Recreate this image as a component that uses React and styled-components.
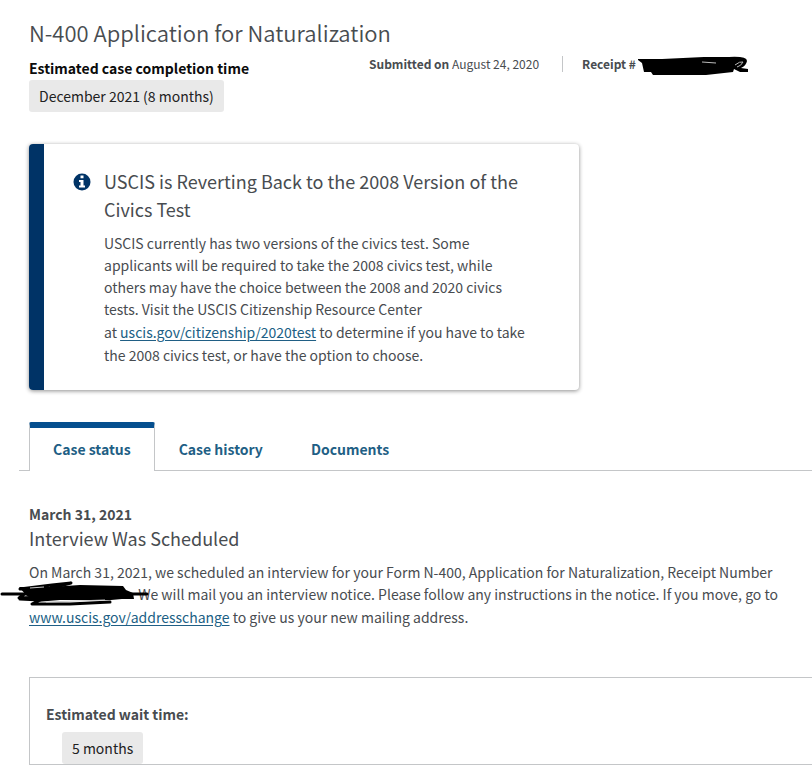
import React from "react";
import styled, { createGlobalStyle } from "styled-components";

const GlobalStyle = createGlobalStyle`
  * { box-sizing: border-box; }
  body {
    margin: 0;
    background: #fff;
    color: #484c50;
    font-family: "Noto Sans CJK SC", "Noto Sans", sans-serif;
    font-size: 14px;
    line-height: 22px;
    overflow-x: hidden;
  }
`;

const Page = styled.main`
  padding: 18px 0 0 29px;
`;

const Title = styled.h1`
  margin: 0;
  font-size: 22px;
  line-height: 28px;
  font-weight: 350;
`;

const Summary = styled.div`
  display: flex;
  align-items: flex-start;
  margin-top: 10px;
`;

const Estimate = styled.div`
  flex: 0 0 340px;
`;

const Label = styled.h2`
  margin: 0;
  color: ${(p) => (p.$strong ? "#0b0b0b" : "#484c50")};
  font-size: 14px;
  line-height: 24px;
  font-weight: 700;
`;

const Chip = styled.span`
  display: inline-block;
  padding: 0 10px;
  border-radius: 3px;
  background: #e9e9e9;
  color: #212121;
  font-size: 14px;
  line-height: 32px;
  vertical-align: top;
`;

const Meta = styled.div`
  display: flex;
  font-size: 12px;
  line-height: 16px;
`;

const MetaItem = styled.div`
  position: relative;
  white-space: nowrap;
  & + & {
    margin-left: 23px;
    padding-left: 19px;
    border-left: 1px solid #c4c6c8;
  }
`;

const ReceiptScribble = styled.svg`
  position: absolute;
  left: 100%;
  top: 0;
  width: 114px;
  height: 22px;
`;

const Alert = styled.section`
  display: flex;
  max-width: 550px;
  margin-top: 32px;
  padding: 23px 46px 24px 29px;
  border-left: 15px solid #003366;
  border-radius: 4px;
  box-shadow: 0 1px 4px rgba(0, 0, 0, 0.45);
`;

const InfoIcon = styled.svg`
  flex: 0 0 18px;
  width: 18px;
  height: 18px;
  margin: 6px 13px 0 0;
`;

const AlertTitle = styled.h2`
  margin: 0 0 9px;
  font-size: 18px;
  line-height: 28px;
  font-weight: 400;
`;

const Text = styled.p`
  margin: 0;
  font-size: 14px;
  line-height: 22px;
`;

const Link = styled.a`
  color: #205f85;
  line-height: 24px;
  text-decoration: underline;
  text-underline-offset: 2px;
`;

const Tabs = styled.div`
  display: flex;
  margin: 32px 0 0 -10px;
  padding-left: 10px;
  box-shadow: inset 0 -1px #c4c6c8;
`;

const Tab = styled.button`
  height: 49px;
  padding: 0 23px 2px;
  border: 1px solid transparent;
  border-width: 6px 1px 0;
  border-color: ${(p) =>
    p["aria-selected"] ? "#054f8f #c4c6c8 transparent" : "transparent"};
  border-radius: 2px 2px 0 0;
  background: ${(p) => (p["aria-selected"] ? "#fff" : "transparent")};
  color: #1f5f85;
  font: inherit;
  font-weight: 700;
`;

const Status = styled.section`
  margin-top: 32px;
  padding-right: 16px;
`;

const StatusDate = styled.p`
  margin: 0;
  font-size: 14px;
  line-height: 22px;
  font-weight: 700;
`;

const StatusTitle = styled.h2`
  margin: 0 0 10px;
  font-size: 18px;
  line-height: 26px;
  font-weight: 400;
`;

const Redacted = styled.span`
  position: relative;
  display: inline-block;
  width: 106px;
  height: 14px;
  vertical-align: baseline;
`;

const StatusScribble = styled.svg`
  position: absolute;
  left: -29px;
  top: -6px;
  width: 152px;
  height: 28px;
`;

const WaitBox = styled.section`
  margin-top: 48px;
  padding: 24px 16px 0;
  border: 1px solid #c4c6c8;
  border-right: 0;
`;

const WaitValue = styled.div`
  margin: 6px 0 0 16px;
`;

export default function App() {
  return (
    <>
      <GlobalStyle />
      <Page>
        <header>
          <Title>N-400 Application for Naturalization</Title>
          <Summary>
            <Estimate>
              <Label $strong>Estimated case completion time</Label>
              <Chip>December 2021 (8 months)</Chip>
            </Estimate>
            <Meta>
              <MetaItem>
                <b>Submitted on</b> August 24, 2020
              </MetaItem>
              <MetaItem>
                <b>Receipt #</b>
                <ReceiptScribble viewBox="0 0 114 22" aria-hidden="true">
                  <path
                    d="M2 3H26L68 1 93 1Q111 0 111 5Q110 10 105 12L112 13V16L104 16 98 13 97 16 70 19 17 19 15 16 8 16 6 7 2 4Z"
                    fill="#000"
                  />
                  <path
                    d="M66 6L80 7M99 9Q104 5 107 6Q105 10 101 11"
                    stroke="#bbb"
                    fill="none"
                  />
                </ReceiptScribble>
              </MetaItem>
            </Meta>
          </Summary>
        </header>

        <Alert>
          <InfoIcon viewBox="0 0 18 18" aria-hidden="true">
            <circle cx="9" cy="9" r="8.5" fill="#003366" />
            <path
              d="M7.5 2.6h3v2.6h-3zM6 7h4.5v5.6H12v2H6v-2h1.5V9H6z"
              fill="#fff"
            />
          </InfoIcon>
          <div>
            <AlertTitle>
              USCIS is Reverting Back to the 2008 Version of the Civics Test
            </AlertTitle>
            <Text>
              USCIS currently has two versions of the civics test. Some
              applicants will be required to take the 2008 civics test, while
              others may have the choice between the 2008 and 2020 civics
              tests. Visit the USCIS Citizenship Resource Center at{"\u00a0"}
              <Link href="#citizenship">uscis.gov/citizenship/2020test</Link> to
              determine if you have to take the 2008 civics test, or have the
              option to choose.
            </Text>
          </div>
        </Alert>

        <Tabs role="tablist">
          <Tab type="button" role="tab" aria-selected={true}>
            Case status
          </Tab>
          <Tab type="button" role="tab" aria-selected={false}>
            Case history
          </Tab>
          <Tab type="button" role="tab" aria-selected={false}>
            Documents
          </Tab>
        </Tabs>

        <Status>
          <StatusDate>March 31, 2021</StatusDate>
          <StatusTitle>Interview Was Scheduled</StatusTitle>
          <Text>
            On March 31, 2021, we scheduled an interview for your Form N-400,
            Application for Naturalization, Receipt Number{" "}
            <Redacted>
              <StatusScribble viewBox="0 0 152 28" aria-hidden="true">
                <path
                  d="M19 7L50 7 80 5 123 6 126 10 133 13 134 19 122 19 111 20 60 20 36 22 26 15Z"
                  fill="#000"
                />
                <path
                  d="M2 14H147M20 9L52 5 71 3 48 9M20 9L104 8M26 13L19 18L44 17M20 19L40 20L32 24H70L110 22"
                  fill="none"
                  stroke="#000"
                  strokeWidth="3"
                  strokeLinecap="round"
                  strokeLinejoin="round"
                />
                <path
                  d="M30 8L44 7M46 22L105 20"
                  fill="none"
                  stroke="#ccc"
                />
              </StatusScribble>
            </Redacted>{" "}
            We will mail you an interview notice. Please follow any instructions
            in the notice. If you move, go to{" "}
            <Link href="#addresschange">www.uscis.gov/addresschange</Link> to
            give us your new mailing address.
          </Text>
        </Status>

        <WaitBox>
          <Label>Estimated wait time:</Label>
          <WaitValue>
            <Chip>5 months</Chip>
          </WaitValue>
        </WaitBox>
      </Page>
    </>
  );
}
